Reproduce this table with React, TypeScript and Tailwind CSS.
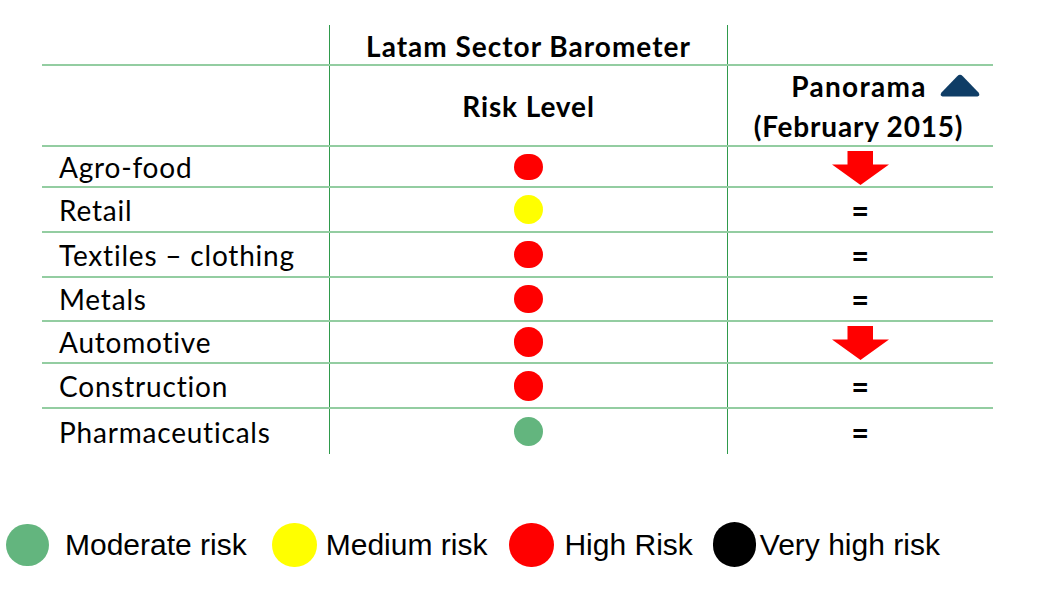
import React from "react";

type Row = {
  label: string;
  dotColor: string;
  dotClass: string;
  rowClass: string;
  trend: "down" | "eq";
};

const rows: Row[] = [
  { label: "Agro-food", dotColor: "bg-[#ff0000]", dotClass: "w-[29px] h-[26px]", rowClass: "h-[41px]", trend: "down" },
  { label: "Retail", dotColor: "bg-[#ffff00]", dotClass: "w-[29px] h-[29px]", rowClass: "h-[45px]", trend: "eq" },
  { label: "Textiles – clothing", dotColor: "bg-[#ff0000]", dotClass: "w-[29px] h-[27px]", rowClass: "h-[45px]", trend: "eq" },
  { label: "Metals", dotColor: "bg-[#ff0000]", dotClass: "w-[29px] h-[28px]", rowClass: "h-[44px]", trend: "eq" },
  { label: "Automotive", dotColor: "bg-[#ff0000]", dotClass: "w-[29px] h-[30px]", rowClass: "h-[42px]", trend: "down" },
  { label: "Construction", dotColor: "bg-[#ff0000]", dotClass: "w-[29px] h-[30px]", rowClass: "h-[45px]", trend: "eq" },
  { label: "Pharmaceuticals", dotColor: "bg-[#63b57e]", dotClass: "w-[29px] h-[29px]", rowClass: "h-[45px]", trend: "eq" },
];

function DownArrow() {
  return (
    <svg width="57" height="34" viewBox="0 0 57 34" className="mt-[2px]">
      <path d="M15.5 0 H41 V13.5 H57 L28.5 34 L0 13.5 H15.5 Z" fill="#ff0000" />
    </svg>
  );
}

function UpTriangle() {
  return (
    <svg width="40" height="23" viewBox="0 0 40 23">
      <path
        d="M17.2 2.2 Q20 -0.6 22.8 2.2 L38.5 18.5 Q41 22.5 36 22.5 H4 Q-1 22.5 1.5 18.5 Z"
        fill="#0f3d66"
      />
    </svg>
  );
}

export default function App() {
  const tableFont = { fontFamily: "Lato, 'Open Sans', sans-serif" } as React.CSSProperties;
  return (
    <div className="w-[1051px] h-[593px] bg-white overflow-hidden pt-[25px]">
      <div className="ml-[42px] w-[951px] text-black text-[28px] tracking-[0.8px]" style={tableFont}>
        {/* header row 1 */}
        <div className="flex h-[41px] border-b-2 border-[#93cda1]">
          <div className="w-[287px]" />
          <div className="w-[398px] border-l border-[#2f9a4c] flex items-center justify-center font-bold tracking-[1px] pt-[2px]">
            Latam Sector Barometer
          </div>
          <div className="flex-1 border-l border-[#2f9a4c]" />
        </div>
        {/* header row 2 */}
        <div className="flex h-[81px] border-b-2 border-[#93cda1]">
          <div className="w-[287px]" />
          <div className="w-[398px] border-l border-[#2f9a4c] flex items-center justify-center font-bold tracking-[0.9px]">
            Risk Level
          </div>
          <div className="flex-1 border-l border-[#2f9a4c] flex flex-col items-center justify-center font-bold leading-[40px]">
            <div className="flex items-center pl-[50px]">
              <span className="tracking-[1.3px]">Panorama</span>
              <span className="ml-[13px] flex items-center">
                <UpTriangle />
              </span>
            </div>
            <div className="tracking-[0.8px] mr-[4px]">(February 2015)</div>
          </div>
        </div>
        {rows.map((r, i) => (
          <div
            key={r.label}
            className={
              "flex " +
              r.rowClass +
              (i < rows.length - 1 ? " border-b-2 border-[#93cda1]" : "")
            }
          >
            <div className="w-[287px] pl-[17px] flex items-center">{r.label}</div>
            <div className="w-[398px] border-l border-[#2f9a4c] flex items-center justify-center">
              <div className={"rounded-full " + r.dotColor + " " + r.dotClass} />
            </div>
            <div className="flex-1 border-l border-[#2f9a4c] flex items-center justify-center">
              {r.trend === "down" ? (
                <DownArrow />
              ) : (
                <span className="font-black text-[30px] leading-none">=</span>
              )}
            </div>
          </div>
        ))}
      </div>

      {/* legend */}
      <div
        className="mt-[68px] flex items-center text-[30px] text-black"
        style={{ fontFamily: "'Liberation Sans', Arial, sans-serif" }}
      >
        <div className="ml-[6px] w-[43px] h-[42px] rounded-full bg-[#63b57e]" />
        <span className="ml-[16px]">Moderate risk</span>
        <div className="ml-[25px] w-[45px] h-[44px] rounded-full bg-[#ffff00]" />
        <span className="ml-[9px]">Medium risk</span>
        <div className="ml-[22px] w-[45px] h-[44px] rounded-full bg-[#ff0000]" />
        <span className="ml-[10px]">High Risk</span>
        <div className="ml-[20px] w-[43px] h-[45px] rounded-full bg-black" />
        <span className="ml-[4px]">Very high risk</span>
      </div>
    </div>
  );
}
